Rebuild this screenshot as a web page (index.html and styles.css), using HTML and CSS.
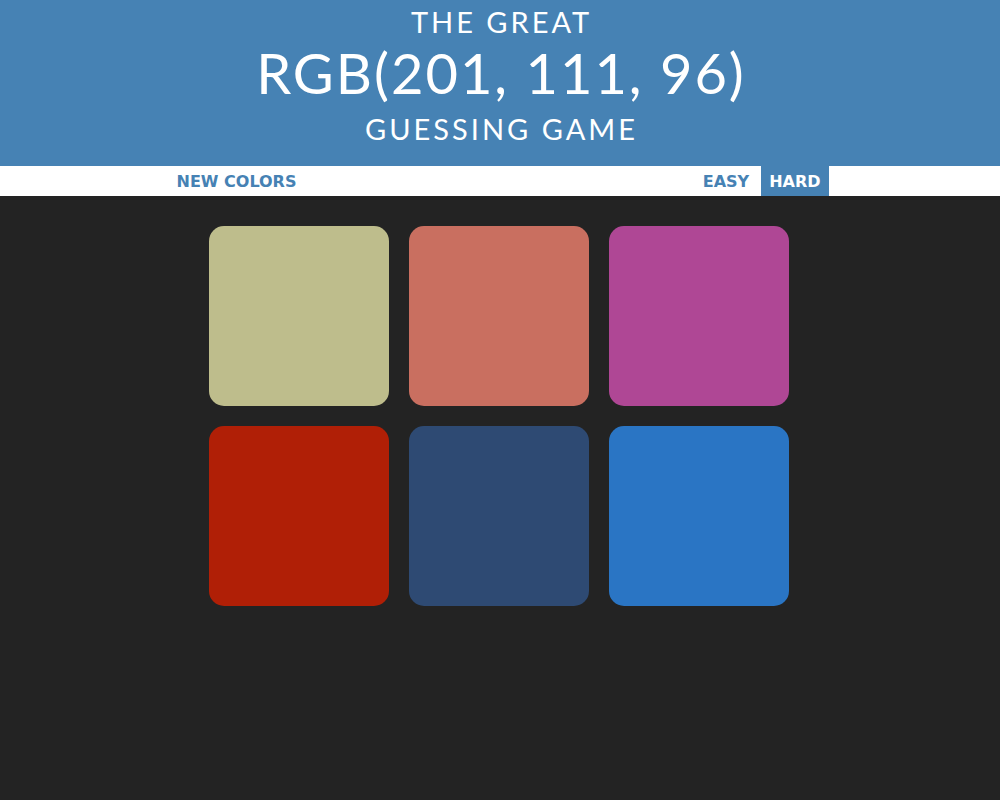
FILE: index.html
```html
<!DOCTYPE html>
<html>
<head>
<meta charset="utf-8">
<link rel="stylesheet" href="styles.css">
</head>
<body>
<h1 class="title">
  <span class="line small">THE GREAT</span>
  <span class="line big">RGB(201, 111, 96)</span>
  <span class="line small last">GUESSING GAME</span>
</h1>
<div class="stripe">
  <div class="stripe-inner">
    <button class="btn new">NEW COLORS</button>
    <div class="modes">
      <button class="btn">EASY</button>
      <button class="btn selected">HARD</button>
    </div>
  </div>
</div>
<div class="container">
  <div class="square" style="background: rgb(190, 189, 140)"></div>
  <div class="square" style="background: rgb(201, 111, 96)"></div>
  <div class="square" style="background: rgb(175, 71, 149)"></div>
  <div class="square" style="background: rgb(176, 31, 6)"></div>
  <div class="square" style="background: rgb(46, 74, 115)"></div>
  <div class="square" style="background: rgb(42, 117, 196)"></div>
</div>
</body>
</html>
```
FILE: styles.css
```css
body {
  margin: 0;
  background: #232323;
  font-family: "Lato", sans-serif;
}
.title {
  margin: 0;
  background: #4682b4;
  color: #fff;
  font-weight: 400;
  text-align: center;
  height: 166px;
  display: flex;
  flex-direction: column;
  align-items: center;
  padding-top: 2px;
  box-sizing: border-box;
}
.line { display: block; }
.small { font-size: 29px; line-height: 40px; letter-spacing: 3px; padding-left: 3px; }
.big { font-size: 56px; line-height: 61px; letter-spacing: 2px; padding-left: 2px; }
.last { line-height: 52px; }
.stripe {
  background: #fff;
  height: 30px;
}
.stripe-inner {
  width: 652px;
  margin: 0 auto;
  padding-left: 5px;
  display: flex;
  justify-content: space-between;
  height: 30px;
}
.modes { display: flex; }
.btn {
  border: none;
  background: #fff;
  color: #4682b4;
  font-family: "DejaVu Sans", sans-serif;
  font-weight: bold;
  font-size: 16px;
  padding: 0 8px;
  height: 30px;
  margin: 0;
}
.btn.new { padding: 0; }
.btn.selected {
  background: #4682b4;
  color: #fff;
  margin-left: 4px;
  padding: 0 8px 0 8px;
}
.container {
  width: 600px;
  box-sizing: border-box;
  padding: 0 11px 0 9px;
  margin: 30px auto 0;
  display: grid;
  grid-template-columns: repeat(3, 180px);
  gap: 20px;
}
.square {
  width: 180px;
  height: 180px;
  border-radius: 15px;
}
```
